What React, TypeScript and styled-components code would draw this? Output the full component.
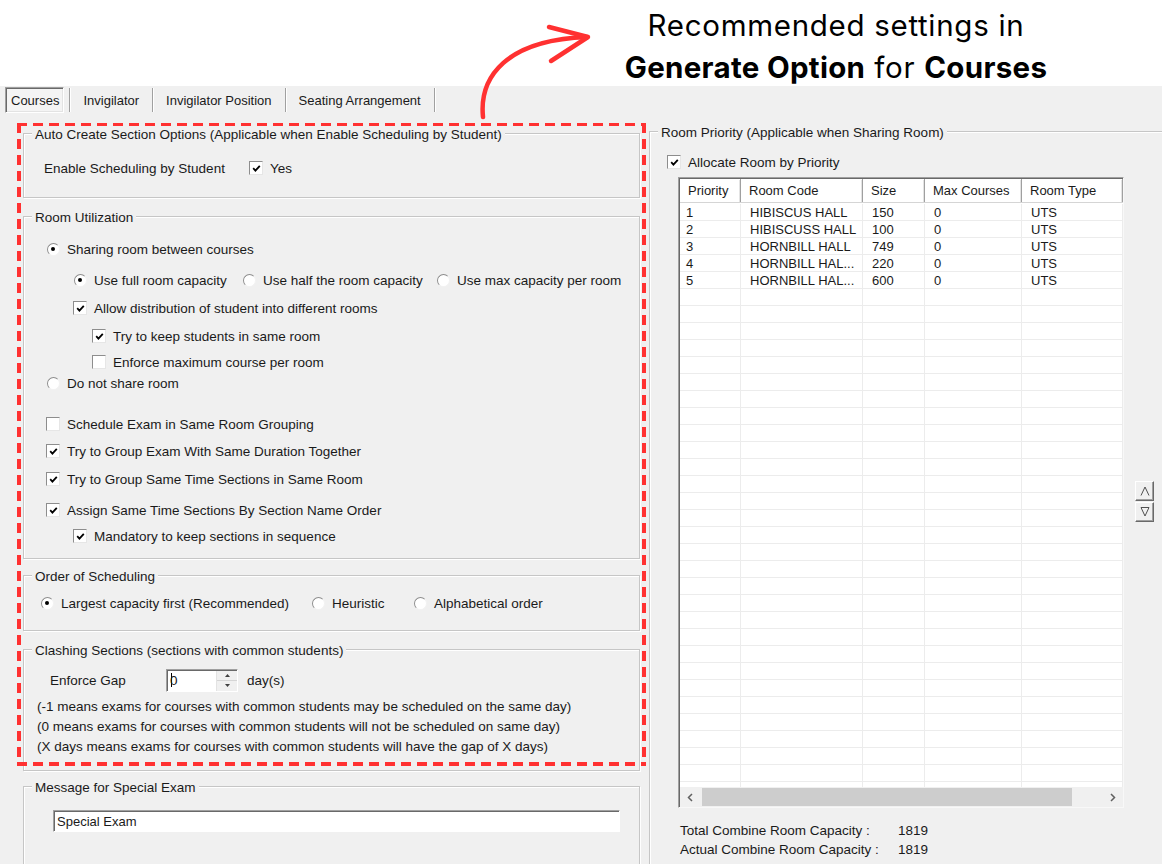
import React from "react";
import styled, { createGlobalStyle } from "styled-components";

const UI_FONT = `"Liberation Sans", Arial, sans-serif`;

const GlobalStyle = createGlobalStyle`
  html, body {
    margin: 0;
    padding: 0;
    background: #f0f0f0;
  }
  body {
    font-family: ${UI_FONT};
  }
`;

const ROOMS = [
  { priority: 1, code: "HIBISCUS HALL", size: 150, max: 0, type: "UTS" },
  { priority: 2, code: "HIBISCUSS HALL", size: 100, max: 0, type: "UTS" },
  { priority: 3, code: "HORNBILL HALL", size: 749, max: 0, type: "UTS" },
  { priority: 4, code: "HORNBILL HAL...", size: 220, max: 0, type: "UTS" },
  { priority: 5, code: "HORNBILL HAL...", size: 600, max: 0, type: "UTS" },
];

const EMPTY_ROWS = 30;
const COLS = "61px 122px 62px 97px 1fr";

const CheckMark = () => (
  <svg width="9" height="9" viewBox="0 0 9 9">
    <path d="M1.2 4.2 L3.4 6.6 L7.8 1.8" fill="none" stroke="#000" strokeWidth="1.8" />
  </svg>
);

const CheckBox: React.FC<{ checked?: boolean }> = ({ checked }) => (
  <Slot>
    <Box>{checked && <CheckMark />}</Box>
  </Slot>
);

const Radio: React.FC<{ checked?: boolean }> = ({ checked }) => (
  <Slot>
    <Round $on={checked} />
  </Slot>
);

const Chevron: React.FC<{ dir: "left" | "right" }> = ({ dir }) => (
  <svg width="6" height="9" viewBox="0 0 6 9">
    <path
      d={dir === "left" ? "M5 1 L1.5 4.5 L5 8" : "M1 1 L4.5 4.5 L1 8"}
      fill="none"
      stroke="#606060"
      strokeWidth="1.5"
    />
  </svg>
);

const App: React.FC = () => {
  return (
    <Page>
      <GlobalStyle />
      <Banner>
        <BannerLine>Recommended settings in</BannerLine>
        <BannerLine>
          <b>Generate Option</b> for <b>Courses</b>
        </BannerLine>
      </Banner>

      <TabStrip>
        <Tab $active>Courses</Tab>
        <TabDivider />
        <Tab>Invigilator</Tab>
        <TabDivider />
        <Tab>Invigilator Position</Tab>
        <TabDivider />
        <Tab>Seating Arrangement</Tab>
        <TabDivider />
      </TabStrip>

      <Columns>
        <LeftColumn>
          <Group $height={65}>
            <Legend>Auto Create Section Options (Applicable when Enable Scheduling by Student)</Legend>
            <Row $mt={16} $indent={20}>
              <FieldLabel $width={205}>Enable Scheduling by Student</FieldLabel>
              <Option>
                <CheckBox checked />
                Yes
              </Option>
            </Row>
          </Group>

          <Group $height={343} $mt={18}>
            <Legend>Room Utilization</Legend>
            <Row $mt={14} $indent={22}>
              <Option>
                <Radio checked />
                Sharing room between courses
              </Option>
            </Row>
            <Row $mt={13} $indent={49}>
              <Option $width={169}>
                <Radio checked />
                Use full room capacity
              </Option>
              <Option $width={194}>
                <Radio />
                Use half the room capacity
              </Option>
              <Option>
                <Radio />
                Use max capacity per room
              </Option>
            </Row>
            <Row $mt={10} $indent={49}>
              <Option>
                <CheckBox checked />
                Allow distribution of student into different rooms
              </Option>
            </Row>
            <Row $mt={10} $indent={68}>
              <Option>
                <CheckBox checked />
                Try to keep students in same room
              </Option>
            </Row>
            <Row $mt={8} $indent={68}>
              <Option>
                <CheckBox />
                Enforce maximum course per room
              </Option>
            </Row>
            <Row $mt={3} $indent={22}>
              <Option>
                <Radio />
                Do not share room
              </Option>
            </Row>
            <Row $mt={23} $indent={22}>
              <Option>
                <CheckBox />
                Schedule Exam in Same Room Grouping
              </Option>
            </Row>
            <Row $mt={9} $indent={22}>
              <Option>
                <CheckBox checked />
                Try to Group Exam With Same Duration Together
              </Option>
            </Row>
            <Row $mt={10} $indent={22}>
              <Option>
                <CheckBox checked />
                Try to Group Same Time Sections in Same Room
              </Option>
            </Row>
            <Row $mt={13} $indent={22}>
              <Option>
                <CheckBox checked />
                Assign Same Time Sections By Section Name Order
              </Option>
            </Row>
            <Row $mt={8} $indent={49}>
              <Option>
                <CheckBox checked />
                Mandatory to keep sections in sequence
              </Option>
            </Row>
          </Group>

          <Group $height={56} $mt={16}>
            <Legend>Order of Scheduling</Legend>
            <Row $mt={9} $indent={16}>
              <Option $width={271}>
                <Radio checked />
                Largest capacity first (Recommended)
              </Option>
              <Option $width={102}>
                <Radio />
                Heuristic
              </Option>
              <Option>
                <Radio />
                Alphabetical order
              </Option>
            </Row>
          </Group>

          <Group $height={122} $mt={18}>
            <Legend>Clashing Sections (sections with common students)</Legend>
            <Row $mt={9} $indent={26} $tall>
              <FieldLabel $width={116}>Enforce Gap</FieldLabel>
              <SpinBox>
                <SpinValue>
                  <Caret />0
                </SpinValue>
                <SpinButtons>
                  <SpinHalf>
                    <svg width="5" height="3" viewBox="0 0 5 3">
                      <path d="M0 3 L2.5 0 L5 3 Z" fill="#404040" />
                    </svg>
                  </SpinHalf>
                  <SpinHalf>
                    <svg width="5" height="3" viewBox="0 0 5 3">
                      <path d="M0 0 L2.5 3 L5 0 Z" fill="#404040" />
                    </svg>
                  </SpinHalf>
                </SpinButtons>
              </SpinBox>
              <Unit>day(s)</Unit>
            </Row>
            <Note $mt={5}>(-1 means exams for courses with common students may be scheduled on the same day)</Note>
            <Note>(0 means exams for courses with common students will not be scheduled on same day)</Note>
            <Note>(X days means exams for courses with common students will have the gap of X days)</Note>
          </Group>

          <Group $height={100} $mt={15}>
            <Legend>Message for Special Exam</Legend>
            <TextField>Special Exam</TextField>
          </Group>

          <Highlight />
        </LeftColumn>

        <RightGroup>
          <Legend>Room Priority (Applicable when Sharing Room)</Legend>
          <Row $mt={12} $indent={17}>
            <Option>
              <CheckBox checked />
              Allocate Room by Priority
            </Option>
          </Row>
          <TableRow>
            <ListView>
              <ListHeader>
                <HeadCell>Priority</HeadCell>
                <HeadCell>Room Code</HeadCell>
                <HeadCell>Size</HeadCell>
                <HeadCell>Max Courses</HeadCell>
                <HeadCell>Room Type</HeadCell>
              </ListHeader>
              <ListBody>
                {ROOMS.map((r) => (
                  <ListRow key={r.priority}>
                    <Cell $first>{r.priority}</Cell>
                    <Cell>{r.code}</Cell>
                    <Cell>{r.size}</Cell>
                    <Cell>{r.max}</Cell>
                    <Cell>{r.type}</Cell>
                  </ListRow>
                ))}
                {Array.from({ length: EMPTY_ROWS }).map((_, i) => (
                  <ListRow key={`empty-${i}`}>
                    <Cell $first />
                    <Cell />
                    <Cell />
                    <Cell />
                    <Cell />
                  </ListRow>
                ))}
              </ListBody>
              <HScroll>
                <ScrollArrow>
                  <Chevron dir="left" />
                </ScrollArrow>
                <ScrollTrack>
                  <ScrollThumb />
                </ScrollTrack>
                <ScrollArrow>
                  <Chevron dir="right" />
                </ScrollArrow>
              </HScroll>
            </ListView>
            <MoveButtons>
              <MoveButton>
                <svg width="10" height="10" viewBox="0 0 10 10">
                  <path d="M1 9.5 L5 1 L9 9.5" fill="none" stroke="#505050" strokeWidth="1" />
                </svg>
              </MoveButton>
              <MoveButton>
                <svg width="10" height="10" viewBox="0 0 10 10">
                  <path d="M1 0.5 L9 0.5 L5 9 Z" fill="none" stroke="#505050" strokeWidth="1" />
                </svg>
              </MoveButton>
            </MoveButtons>
          </TableRow>
          <Summary $mt={13}>
            <SummaryLabel>Total Combine Room Capacity :</SummaryLabel>
            <span>1819</span>
          </Summary>
          <Summary>
            <SummaryLabel>Actual Combine Room Capacity :</SummaryLabel>
            <span>1819</span>
          </Summary>
        </RightGroup>
      </Columns>

      <Pointer width="130" height="110" viewBox="0 0 130 110">
        <path
          d="M13 102 C9 62 36 25 117 22"
          fill="none"
          stroke="#ff3131"
          strokeWidth="4.5"
          strokeLinecap="round"
        />
        <path
          d="M79 12 L118 22 L81 46"
          fill="none"
          stroke="#ff3131"
          strokeWidth="4.5"
          strokeLinecap="round"
          strokeLinejoin="round"
        />
      </Pointer>
    </Page>
  );
};

export default App;

const Page = styled.div`
  position: relative;
  width: 1162px;
  height: 864px;
  overflow: hidden;
  background: #f0f0f0;
  font-family: ${UI_FONT};
  font-size: 13.5px;
  color: #1a1a1a;
`;

const Banner = styled.header`
  height: 86px;
  box-sizing: border-box;
  padding: 4px 0 0 510px;
  background: #fff;
  display: flex;
  flex-direction: column;
  align-items: center;
  font-family: Inter, Lato, sans-serif;
  font-size: 29.5px;
  letter-spacing: 0.7px;
  color: #000;
  b {
    font-weight: 700;
    letter-spacing: 0.3px;
  }
`;

const BannerLine = styled.div`
  line-height: 42px;
  white-space: nowrap;
`;

const TabStrip = styled.nav`
  display: flex;
  align-items: flex-start;
  height: 27px;
  box-sizing: border-box;
  padding-left: 5px;
  font-size: 13px;
`;

const Tab = styled.div<{ $active?: boolean }>`
  box-sizing: border-box;
  height: ${({ $active }) => ($active ? "26px" : "24px")};
  margin-top: ${({ $active }) => ($active ? "1px" : "2px")};
  display: flex;
  align-items: center;
  padding: ${({ $active }) => ($active ? "0 4px 0 5px" : "0 13px 0 12px")};
  margin-right: ${({ $active }) => ($active ? "5px" : "0")};
  white-space: nowrap;
  ${({ $active }) =>
    $active &&
    `
    border: 1px solid;
    border-color: #a0a0a0 #ffffff #ffffff #a0a0a0;
    box-shadow: inset 1px 1px 0 #696969, inset -1px -1px 0 #e3e3e3;
    background: #f4f4f4;
  `}
`;

const TabDivider = styled.span`
  width: 1px;
  height: 24px;
  margin-top: 2px;
  background: #a0a0a0;
  border-right: 1px solid #fff;
`;

const Columns = styled.div`
  display: flex;
  align-items: flex-start;
  gap: 9px;
  padding-left: 23px;
`;

const LeftColumn = styled.div`
  position: relative;
  width: 617px;
  flex: none;
  display: flex;
  flex-direction: column;
  padding-top: 20px;
`;

const Group = styled.section<{ $height: number; $mt?: number }>`
  box-sizing: border-box;
  height: ${({ $height }) => $height}px;
  margin-top: ${({ $mt = 0 }) => $mt}px;
  border: 1px solid #c6c6c6;
  box-shadow: inset 1px 1px 0 #fff, 1px 1px 0 #fff;
  display: flex;
  flex-direction: column;
  align-items: flex-start;
`;

const RightGroup = styled(Group).attrs({ $height: 760 })`
  width: 525px;
  flex: none;
  margin-top: 18px;
`;

const Legend = styled.div`
  height: 16px;
  line-height: 16px;
  margin: -7px 0 0 8px;
  padding: 0 3px;
  background: #f0f0f0;
  white-space: nowrap;
`;

const Row = styled.div<{ $mt?: number; $indent: number; $tall?: boolean }>`
  display: flex;
  align-items: center;
  height: ${({ $tall }) => ($tall ? 24 : 18)}px;
  margin-top: ${({ $mt = 0 }) => $mt}px;
  margin-left: ${({ $indent }) => $indent}px;
  white-space: nowrap;
`;

const FieldLabel = styled.span<{ $width: number }>`
  width: ${({ $width }) => $width}px;
  flex: none;
`;

const Option = styled.label<{ $width?: number }>`
  display: inline-flex;
  align-items: center;
  gap: 7px;
  ${({ $width }) => ($width ? `width: ${$width}px; flex: none;` : "")}
`;

const Slot = styled.span`
  width: 14px;
  height: 14px;
  flex: none;
  display: inline-flex;
  align-items: center;
  justify-content: center;
`;

const Box = styled.span`
  width: 14px;
  height: 14px;
  box-sizing: border-box;
  background: #fff;
  border: 1px solid;
  border-color: #8d8d8d #e6e6e6 #e6e6e6 #8d8d8d;
  display: inline-flex;
  align-items: center;
  justify-content: center;
`;

const Round = styled.span<{ $on?: boolean }>`
  width: 13px;
  height: 13px;
  box-sizing: border-box;
  border-radius: 50%;
  background: #fff;
  border: 1px solid;
  border-color: #8d8d8d #f2f2f2 #f2f2f2 #8d8d8d;
  display: inline-flex;
  align-items: center;
  justify-content: center;
  &::after {
    content: "";
    display: ${({ $on }) => ($on ? "block" : "none")};
    width: 4px;
    height: 4px;
    border-radius: 50%;
    background: #000;
  }
`;

const SpinBox = styled.div`
  display: flex;
  width: 72px;
  height: 23px;
  box-sizing: border-box;
  flex: none;
  background: #fff;
  border: 1px solid;
  border-color: #a0a0a0 #fff #fff #a0a0a0;
  box-shadow: inset 1px 1px 0 #696969;
`;

const SpinValue = styled.div`
  flex: 1;
  display: flex;
  align-items: center;
  padding-left: 4px;
`;

const Caret = styled.span`
  width: 1px;
  height: 14px;
  background: #000;
  margin-right: -2px;
`;

const SpinButtons = styled.div`
  width: 20px;
  display: flex;
  flex-direction: column;
  background: #f0f0f0;
  border-left: 1px solid #e3e3e3;
  margin: 1px 0 0 0;
`;

const SpinHalf = styled.div`
  flex: 1;
  display: flex;
  align-items: center;
  justify-content: center;
  & + & {
    border-top: 1px solid #d5d5d5;
  }
`;

const Unit = styled.span`
  margin-left: 9px;
`;

const Note = styled.div<{ $mt?: number }>`
  height: 20px;
  line-height: 20px;
  margin: ${({ $mt = 0 }) => $mt}px 0 0 13px;
  white-space: nowrap;
`;

const TextField = styled.div`
  width: 567px;
  height: 22px;
  box-sizing: border-box;
  margin: 14px 0 0 29px;
  padding-left: 3px;
  display: flex;
  align-items: center;
  background: #fff;
  border: 1px solid;
  border-color: #a0a0a0 #fff #fff #a0a0a0;
  box-shadow: inset 1px 1px 0 #696969;
  font-size: 13px;
`;

const Highlight = styled.div`
  position: absolute;
  left: -6px;
  top: 10px;
  width: 629px;
  height: 643px;
  pointer-events: none;
  background:
    repeating-linear-gradient(90deg, #ff3131 0 10px, transparent 10px 16px) left top / 100% 3px no-repeat,
    repeating-linear-gradient(90deg, #ff3131 0 10px, transparent 10px 16px) left bottom / 100% 4px no-repeat,
    repeating-linear-gradient(180deg, #ff3131 0 10px, transparent 10px 16px) left top / 4px 100% no-repeat,
    repeating-linear-gradient(180deg, #ff3131 0 10px, transparent 10px 16px) right top / 4px 100% no-repeat;
`;

const TableRow = styled.div`
  display: flex;
  align-items: center;
  margin: 6px 0 0 28px;
`;

const ListView = styled.div`
  width: 446px;
  height: 631px;
  box-sizing: border-box;
  flex: none;
  display: flex;
  flex-direction: column;
  background: #fff;
  border: 1px solid;
  border-color: #a0a0a0 #f8f8f8 #f8f8f8 #a0a0a0;
  box-shadow: inset 1px 1px 0 #696969;
  padding: 1px 0 0 1px;
  overflow: hidden;
  font-size: 13px;
`;

const ListHeader = styled.div`
  display: grid;
  grid-template-columns: ${COLS};
  height: 24px;
  flex: none;
  background: #fff;
  border-bottom: 1px solid #d5d5d5;
  box-sizing: border-box;
`;

const HeadCell = styled.div`
  display: flex;
  align-items: center;
  padding-left: 8px;
  border-right: 1px solid #a0a0a0;
  box-shadow: inset 1px 1px 0 #fff, inset -1px 0 0 #e3e3e3;
  white-space: nowrap;
`;

const ListBody = styled.div`
  flex: 1;
  overflow: hidden;
  padding-top: 1px;
`;

const ListRow = styled.div`
  display: grid;
  grid-template-columns: ${COLS};
  height: 17px;
  box-sizing: border-box;
  border-bottom: 1px solid #ececec;
`;

const Cell = styled.div<{ $first?: boolean }>`
  display: flex;
  align-items: center;
  padding-left: ${({ $first }) => ($first ? 6 : 9)}px;
  border-right: 1px solid #ececec;
  white-space: nowrap;
  overflow: hidden;
`;

const HScroll = styled.div`
  height: 20px;
  flex: none;
  display: flex;
  background: #f0f0f0;
`;

const ScrollArrow = styled.div`
  width: 20px;
  display: flex;
  align-items: center;
  justify-content: center;
`;

const ScrollTrack = styled.div`
  flex: 1;
  display: flex;
  padding: 1px 0;
  box-sizing: border-box;
`;

const ScrollThumb = styled.div`
  width: 370px;
  margin-left: 2px;
  background: #cdcdcd;
`;

const MoveButtons = styled.div`
  display: flex;
  flex-direction: column;
  gap: 1px;
  margin: 18px 0 0 11px;
`;

const MoveButton = styled.div`
  width: 19px;
  height: 20px;
  box-sizing: border-box;
  display: flex;
  align-items: center;
  justify-content: center;
  background: #f0f0f0;
  border: 1px solid;
  border-color: #fff #696969 #696969 #fff;
  box-shadow: inset -1px -1px 0 #a0a0a0;
`;

const Summary = styled.div<{ $mt?: number }>`
  display: flex;
  height: 19px;
  align-items: center;
  margin: ${({ $mt = 0 }) => $mt}px 0 0 30px;
  white-space: nowrap;
`;

const SummaryLabel = styled.span`
  width: 218px;
`;

const Pointer = styled.svg`
  position: absolute;
  left: 470px;
  top: 15px;
  pointer-events: none;
`;
